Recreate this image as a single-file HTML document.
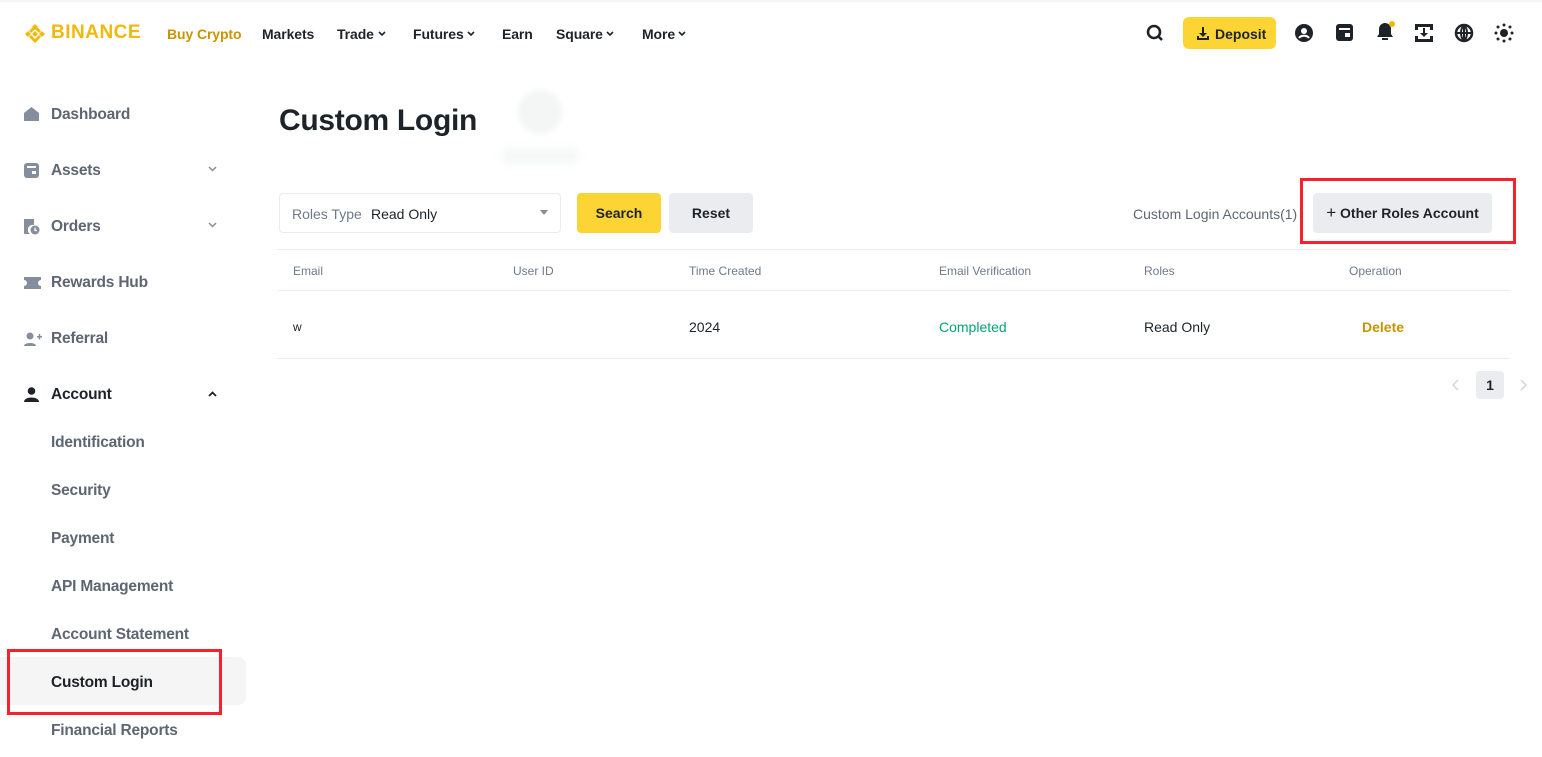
<!DOCTYPE html>
<html><head><meta charset="utf-8"><style>
*{box-sizing:border-box;margin:0;padding:0}
body{width:1542px;height:757px;background:#fff;font-family:"Liberation Sans",sans-serif;color:#1E2329;position:relative;overflow:hidden}
.a{position:absolute;white-space:nowrap}
.nav{font-size:14px;font-weight:700;color:#1E2329;top:26px;letter-spacing:-0.1px}
.side{font-size:15.5px;font-weight:700;color:#5E6673;left:51px;letter-spacing:-0.2px}
.ic{position:absolute;left:24px}
.th{font-size:12px;color:#707A8A;top:264px}
.td{font-size:14px;top:319px}
.hl{position:absolute;height:1px;background:#EAECEF;left:277px;width:1233px}
.chev{position:absolute}
</style></head><body>
<div class="a" style="left:0;top:0;width:1542px;height:2px;background:#f5f5f5"></div>
<svg class="a" style="left:23px;top:22px" width="24" height="24" viewBox="0 0 24 24" fill="#F0B90B"><path d="M12 2l3 3-3 3-3-3zM5 9l3 3-3 3-3-3zM19 9l3 3-3 3-3-3zM12 9l3 3-3 3-3-3zM8 13l4 4 4-4 2 2-6 6-6-6z"/><path d="M6 9l6-6 6 6-2 2-4-4-4 4z"/></svg>
<div class="a" style="left:51px;top:22px;font-size:19px;font-weight:700;color:#F0B90B;letter-spacing:0.5px">BINANCE</div>
<div class="a nav" style="left:167px;color:#C99400">Buy Crypto</div>
<div class="a nav" style="left:262px">Markets</div>
<div class="a nav" style="left:337px">Trade</div>
<svg class="chev" style="left:378px;top:31px" width="8" height="6" viewBox="0 0 8 6"><path d="M1 1l3 3 3-3" stroke="#1E2329" stroke-width="1.6" fill="none"/></svg>
<div class="a nav" style="left:413px">Futures</div>
<svg class="chev" style="left:467px;top:31px" width="8" height="6" viewBox="0 0 8 6"><path d="M1 1l3 3 3-3" stroke="#1E2329" stroke-width="1.6" fill="none"/></svg>
<div class="a nav" style="left:502px">Earn</div>
<div class="a nav" style="left:556px">Square</div>
<svg class="chev" style="left:606px;top:31px" width="8" height="6" viewBox="0 0 8 6"><path d="M1 1l3 3 3-3" stroke="#1E2329" stroke-width="1.6" fill="none"/></svg>
<div class="a nav" style="left:642px">More</div>
<svg class="chev" style="left:678px;top:31px" width="8" height="6" viewBox="0 0 8 6"><path d="M1 1l3 3 3-3" stroke="#1E2329" stroke-width="1.6" fill="none"/></svg>
<svg class="a" style="left:1145px;top:23px" width="20" height="20" viewBox="0 0 20 20"><circle cx="9" cy="9" r="6" fill="none" stroke="#1E2329" stroke-width="2.6"/><path d="M13 13l4 4" stroke="#1E2329" stroke-width="2.6"/></svg>
<div class="a" style="left:1183px;top:17px;width:93px;height:32px;background:#FCD535;border-radius:6px"></div>
<svg class="a" style="left:1196px;top:26px" width="14" height="14" viewBox="0 0 14 14" fill="#1E2329"><path d="M6 1h2v6h3l-4 4-4-4h3z"/><path d="M1 10h2v2h8v-2h2v4H1z"/></svg>
<div class="a" style="left:1215px;top:26px;font-size:14px;font-weight:700">Deposit</div>
<svg class="a" style="left:1295px;top:24px" width="18" height="18" viewBox="0 0 18 18"><circle cx="9" cy="9" r="9" fill="#1E2329"/><circle cx="9" cy="7" r="3" fill="#fff"/><path d="M4 14c2-3 8-3 10 0" stroke="#fff" stroke-width="2" fill="none"/></svg>
<svg class="a" style="left:1336px;top:24px" width="17" height="17" viewBox="0 0 17 17"><rect width="17" height="17" rx="3" fill="#1E2329"/><rect x="3" y="4" width="11" height="2" fill="#fff"/><rect x="9" y="9" width="5" height="4" fill="#fff"/></svg>
<svg class="a" style="left:1375px;top:20px" width="22" height="22" viewBox="0 0 22 22"><path d="M2 17h16l-2-3V9a6 6 0 0 0-12 0v5z" fill="#1E2329"/><rect x="7" y="18" width="6" height="2" fill="#1E2329"/><circle cx="17" cy="4" r="3" fill="#F0B90B"/></svg>
<svg class="a" style="left:1415px;top:24px" width="18" height="18" viewBox="0 0 18 18" fill="#1E2329"><rect width="18" height="3"/><rect y="15" width="18" height="3"/><rect y="3" width="3" height="3"/><rect x="15" y="3" width="3" height="3"/><rect y="12" width="3" height="3"/><rect x="15" y="12" width="3" height="3"/><path d="M8 4h2v5h3l-4 4-4-4h3z"/></svg>
<svg class="a" style="left:1454px;top:23px" width="20" height="20" viewBox="0 0 20 20"><circle cx="10" cy="10" r="8" fill="none" stroke="#1E2329" stroke-width="2.5"/><path d="M10 2v16M2 10h16M10 2c-4 4-4 12 0 16M10 2c4 4 4 12 0 16" stroke="#1E2329" stroke-width="2" fill="none"/></svg>
<svg class="a" style="left:1494px;top:23px" width="20" height="20" viewBox="0 0 20 20" fill="#1E2329"><circle cx="10" cy="10" r="4"/><circle cx="10" cy="2" r="1.5"/><circle cx="10" cy="18" r="1.5"/><circle cx="2" cy="10" r="1.5"/><circle cx="18" cy="10" r="1.5"/><circle cx="4" cy="4" r="1.5"/><circle cx="16" cy="4" r="1.5"/><circle cx="4" cy="16" r="1.5"/><circle cx="16" cy="16" r="1.5"/></svg>

<svg class="ic" style="top:107px" width="15" height="14" viewBox="0 0 15 14" fill="#848E9C"><path d="M7.5 0L15 6v8H0V6z"/></svg>
<div class="a side" style="top:106px">Dashboard</div>
<svg class="ic" style="top:163px" width="15" height="15" viewBox="0 0 15 15"><rect width="15" height="15" rx="3" fill="#848E9C"/><rect x="3" y="3" width="9" height="2" fill="#fff"/><rect x="8" y="8" width="4" height="3" fill="#fff"/></svg>
<div class="a side" style="top:162px">Assets</div>
<svg class="chev" style="left:208px;top:166px" width="9" height="6" viewBox="0 0 9 6"><path d="M1 1l3.5 3.5L8 1" stroke="#848E9C" stroke-width="1.5" fill="none"/></svg>
<svg class="ic" style="top:219px" width="16" height="16" viewBox="0 0 16 16" fill="#848E9C"><path d="M0 0h10v6a5 5 0 0 0-4 9H0z"/><circle cx="11" cy="11" r="4.5"/><path d="M11 8.5v3h2" stroke="#fff" stroke-width="1.2" fill="none"/></svg>
<div class="a side" style="top:218px">Orders</div>
<svg class="chev" style="left:208px;top:222px" width="9" height="6" viewBox="0 0 9 6"><path d="M1 1l3.5 3.5L8 1" stroke="#848E9C" stroke-width="1.5" fill="none"/></svg>
<svg class="ic" style="top:277px" width="17" height="12" viewBox="0 0 17 12" fill="#848E9C"><path d="M0 0h17v3a3 3 0 0 0 0 6v3H0V9a3 3 0 0 0 0-6z"/></svg>
<div class="a side" style="top:274px">Rewards Hub</div>
<svg class="ic" style="top:332px" width="18" height="14" viewBox="0 0 18 14" fill="#848E9C"><circle cx="6" cy="4" r="3.5"/><path d="M0 14c0-4 12-4 12 0z"/><path d="M13 4h5v1.5h-5zM14.75 2h1.5v5.5h-1.5z"/></svg>
<div class="a side" style="top:330px">Referral</div>
<svg class="ic" style="top:387px" width="15" height="15" viewBox="0 0 15 15" fill="#1E2329"><circle cx="7.5" cy="4" r="3.8"/><path d="M0 15c0-6 15-6 15 0z"/></svg>
<div class="a side" style="top:386px;color:#1E2329">Account</div>
<svg class="chev" style="left:208px;top:391px" width="9" height="6" viewBox="0 0 9 6"><path d="M1 5l3.5-3.5L8 5" stroke="#1E2329" stroke-width="1.8" fill="none"/></svg>
<div class="a side" style="top:434px">Identification</div>
<div class="a side" style="top:482px">Security</div>
<div class="a side" style="top:530px">Payment</div>
<div class="a side" style="top:578px">API Management</div>
<div class="a side" style="top:626px">Account Statement</div>
<div class="a" style="left:0;top:657px;width:246px;height:48px;background:#F5F5F5;border-radius:0 8px 8px 0"></div>
<div class="a side" style="top:674px;color:#1E2329">Custom Login</div>
<div class="a side" style="top:722px">Financial Reports</div>
<div class="a" style="left:7px;top:649px;width:215px;height:66px;border:3px solid #F5222D"></div>

<div class="a" style="left:279px;top:104px;font-size:30px;font-weight:700;letter-spacing:-0.3px">Custom Login</div>
<div class="a" style="left:518px;top:90px;width:44px;height:44px;border-radius:50%;background:#f4f5f5;filter:blur(3px)"></div>
<div class="a" style="left:500px;top:148px;width:80px;height:16px;border-radius:8px;background:#f6f7f7;filter:blur(4px)"></div>

<div class="a" style="left:279px;top:193px;width:282px;height:40px;border:1px solid #EAECEF;border-radius:4px"></div>
<div class="a" style="left:292px;top:206px;font-size:14px;color:#707A8A">Roles Type</div>
<div class="a" style="left:371px;top:206px;font-size:14px;color:#1E2329">Read Only</div>
<div class="a" style="left:540px;top:210px;width:0;height:0;border-left:4px solid transparent;border-right:4px solid transparent;border-top:5px solid #848E9C"></div>
<div class="a" style="left:577px;top:193px;width:84px;height:40px;background:#FCD535;border-radius:4px;font-size:14px;font-weight:700;text-align:center;line-height:40px">Search</div>
<div class="a" style="left:669px;top:193px;width:84px;height:40px;background:#EAECEF;border-radius:4px;font-size:14px;font-weight:700;text-align:center;line-height:40px">Reset</div>
<div class="a" style="left:1133px;top:206px;font-size:14px;color:#5E6673">Custom Login Accounts(1)</div>
<div class="a" style="left:1313px;top:193px;width:179px;height:40px;background:#EAECEF;border-radius:4px;font-size:14px;font-weight:700;text-align:center;line-height:40px"><span style="font-weight:400;font-size:17px">+</span> Other Roles Account</div>
<div class="a" style="left:1300px;top:178px;width:216px;height:66px;border:3px solid #F5222D"></div>

<div class="hl" style="top:249px"></div>
<div class="a th" style="left:293px">Email</div>
<div class="a th" style="left:513px">User ID</div>
<div class="a th" style="left:689px">Time Created</div>
<div class="a th" style="left:939px">Email Verification</div>
<div class="a th" style="left:1144px">Roles</div>
<div class="a th" style="left:1349px">Operation</div>
<div class="hl" style="top:290px"></div>
<div class="a td" style="left:293px;font-size:12px;top:320px">w</div>
<div class="a td" style="left:689px">2024</div>
<div class="a td" style="left:939px;color:#03A66D">Completed</div>
<div class="a td" style="left:1144px">Read Only</div>
<div class="a td" style="left:1362px;color:#C99400;font-weight:700">Delete</div>
<div class="hl" style="top:358px"></div>

<svg class="a" style="left:1452px;top:379px" width="7" height="12" viewBox="0 0 7 12"><path d="M6 1L1 6l5 5" stroke="#D5D8DC" stroke-width="1.6" fill="none"/></svg>
<div class="a" style="left:1476px;top:371px;width:28px;height:28px;background:#EAECEF;border-radius:4px;font-size:14px;font-weight:700;text-align:center;line-height:28px">1</div>
<svg class="a" style="left:1520px;top:379px" width="7" height="12" viewBox="0 0 7 12"><path d="M1 1l5 5-5 5" stroke="#D5D8DC" stroke-width="1.6" fill="none"/></svg>
</body></html>
